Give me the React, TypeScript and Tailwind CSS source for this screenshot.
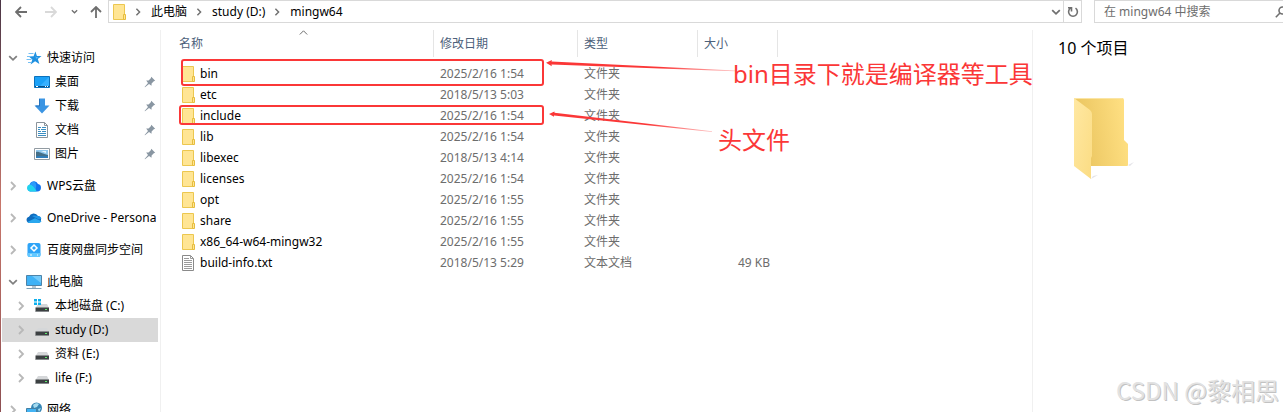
import type { ReactNode } from "react";

type FileRow = { name: string; date: string; type: string; size?: string };

const files: FileRow[] = [
  { name: "bin", date: "2025/2/16 1:54", type: "文件夹" },
  { name: "etc", date: "2018/5/13 5:03", type: "文件夹" },
  { name: "include", date: "2025/2/16 1:54", type: "文件夹" },
  { name: "lib", date: "2025/2/16 1:54", type: "文件夹" },
  { name: "libexec", date: "2018/5/13 4:14", type: "文件夹" },
  { name: "licenses", date: "2025/2/16 1:54", type: "文件夹" },
  { name: "opt", date: "2025/2/16 1:55", type: "文件夹" },
  { name: "share", date: "2025/2/16 1:55", type: "文件夹" },
  { name: "x86_64-w64-mingw32", date: "2025/2/16 1:55", type: "文件夹" },
  { name: "build-info.txt", date: "2018/5/13 5:29", type: "文本文档", size: "49 KB" },
];

function Chevron({ down, className }: { down?: boolean; className: string }) {
  return (
    <svg className={className} viewBox="0 0 10 10" fill="none" stroke="currentColor" strokeWidth="1.8">
      <path d={down ? "M1.2 3.2 5 6.8 8.8 3.2" : "M3 1 7 5 3 9"} />
    </svg>
  );
}

function FolderIcon() {
  return (
    <svg className="w-[13px] h-4 shrink-0" viewBox="0 0 13 16">
      <path d="M.5.5h11v15H.5z" fill="#ffe594" stroke="#ecc74f" />
      <path d="M10.5 10.5h2v5h-2z" fill="#ffe594" stroke="#e6bd3e" />
    </svg>
  );
}

function TextFileIcon() {
  return (
    <svg className="w-[13px] h-4 shrink-0" viewBox="0 0 13 16" fill="none" stroke="#8a8a8a">
      <path d="M.5.5h8l3 3v12H.5z" fill="#fff" />
      <path d="M8.5.5v3h3M2 3.5h5M2 5.5h8M2 7.5h8M2 9.5h8M2 11.5h8M2 13.5h8" stroke="#9b9b9b" />
    </svg>
  );
}

function StarIcon() {
  return (
    <svg className="w-4 h-4" viewBox="0 0 16 16">
      <path d="m9.4 1.4 1.5 4.5 4.6.2-3.7 2.9 1.6 5-4.3-2.8-4.5 3.2 1.800-5-3.600-2.900 4.800-.3z" fill="#1e90e0" />
      <path d="M2.5 3.5h5M1 6.5h4M.5 9.5h5M2 12.5h3" stroke="#74bff3" />
      <path d="m9.2 4 .8 3 3 .2-3 1.5z" fill="#5db9f5" />
    </svg>
  );
}

function DesktopIcon() {
  return (
    <svg className="w-4 h-3" viewBox="0 0 16 12">
      <path d="M.5.5h15v11H.5z" fill="#1ba1f7" stroke="#0b72bd" />
      <path d="M15 1v9H6z" fill="#38b1ff" />
      <path d="M1 10.5h14" stroke="#0a4f86" />
      <path d="M2 10.5h2M11 10.5h1M13 10.5h1" stroke="#fff" />
    </svg>
  );
}

function DownloadIcon() {
  return (
    <svg className="w-4 h-4" viewBox="0 0 16 16">
      <path d="M5 .5h6v7h4.5L8 15.5.5 7.5H5z" fill="#3b95e3" />
      <path d="M5.5 1v7H1.7" fill="none" stroke="#2573bd" />
    </svg>
  );
}

function DocumentIcon() {
  return (
    <svg className="w-3 h-4" viewBox="0 0 12 16">
      <path d="M.5.5h8l3 3v12H.5z" fill="#fff" stroke="#8b949b" />
      <path d="M8.5.5v3h3" fill="none" stroke="#8b949b" />
      <path d="M2 5.5h3M6 5.5h4M2 7.5h2M5 7.5h5M2 9.5h3M6 9.5h4M2 11.5h8M2 13.5h8" stroke="#3b8ec2" />
    </svg>
  );
}

function PictureIcon() {
  return (
    <svg className="w-4 h-3" viewBox="0 0 16 12">
      <path d="M.5.5h15v11H.5z" fill="#fff" stroke="#929ba2" />
      <path d="M2 2h12v8H2z" fill="#8fc8ee" />
      <path d="M2 4c3-1 6 2 12 3v3H2z" fill="#446f88" />
      <path d="M2 8.5c4-1 8 0 12-.5v2H2z" fill="#2f7dbb" />
      <path d="M7 3h5v2z" fill="#e6f4fc" />
    </svg>
  );
}

function WpsIcon() {
  return (
    <svg className="w-4 h-3" viewBox="0 0 16 12">
      <path d="M4 11.5a3.5 3.5 0 0 1-.5-6.5A4.5 4.5 0 0 1 12 4a3.8 3.8 0 0 1-.5 7.5z" fill="#1173ee" />
      <path d="M4 11.5A3.5 3.5 0 0 1 4 4.6c2.5 0 5.5 3 6.5 6.9z" fill="#21d3ee" />
      <path d="M8 1.3c-2 .4-3.5 1.5-4.2 3.5 3 .2 4.5 2.2 5.5 4.7C11 6 10.5 3 8 1.3z" fill="#2a9bfa" />
    </svg>
  );
}

function OneDriveIcon() {
  return (
    <svg className="w-4 h-3" viewBox="0 0 16 11">
      <path d="M3.5 10.5A3.2 3.2 0 0 1 3 4.2 5 5 0 0 1 12 3.5a3.6 3.6 0 0 1 .5 7z" fill="#0f6cbd" />
      <path d="M6 3.5 13 7l2.5-1A3.5 3.5 0 0 0 12 3.5c-2-.5-3.5-.8-6 0z" fill="#2095e6" />
      <path d="M1.5 9.5 9 5.8l6.5 3c-.8 1.2-1.8 1.7-3 1.7h-9c-.8 0-1.5-.4-2-1z" fill="#2aa7ee" />
    </svg>
  );
}

function NetdiskIcon() {
  return (
    <svg className="w-4 h-4" viewBox="0 0 16 16">
      <rect x="1.5" y="1" width="13" height="14" rx="2" fill="#2fa4f7" />
      <path d="M1.5 11h13v2a2 2 0 0 1-2 2h-9a2 2 0 0 1-2-2z" fill="#63c8ff" />
      <path d="m8 3 3 3-3 3-3-3z" fill="none" stroke="#fff" strokeWidth="1.5" />
      <path d="M4 13h2M11 13h1" stroke="#fff" />
    </svg>
  );
}

function ComputerIcon() {
  return (
    <svg className="w-4 h-4" viewBox="0 0 16 16">
      <path d="M.5 1.5h15v10H.5z" fill="#3fb2f6" stroke="#4d83a8" />
      <path d="M15 2v7L6 2z" fill="#74cbfb" />
      <path d="M6 12h4v2H6z" fill="#b8c5ce" />
      <path d="M.5 14.5h15" stroke="#7da0b7" />
    </svg>
  );
}

function DriveIcon({ system }: { system?: boolean }) {
  return (
    <svg className="w-4 h-4" viewBox="0 0 16 16">
      <path d="M4 6h9l2 4H1.5z" fill="#d5d7d9" />
      <path d="M1.5 9.5H15v4H1.5z" fill="#3c4042" />
      <path d="M1.5 13.5H15" stroke="#85898b" />
      <path d="M11 11.5h2" stroke="#5dec6c" />
      {system && <path d="M0 1h3v2.500H0zM4 1h3v2.500H4zM0 4.500h3V7H0zM4 4.500h3V7H4z" fill="#0cafed" />}
    </svg>
  );
}

function NetworkIcon() {
  return (
    <svg className="w-4 h-4" viewBox="0 0 16 16">
      <circle cx="10.5" cy="6" r="5.5" fill="#3686b5" />
      <path d="M7 3c2-2 5-2 6-1l-2 3-3 1zM12 7l3-1-2 4z" fill="#a6dbef" />
      <path d="M.5 6.5h10v7H.5z" fill="#42b3f4" stroke="#4580a3" />
      <path d="M2 15.5h7" stroke="#7da0b7" />
    </svg>
  );
}

function PinIcon() {
  return (
    <svg className="w-3 h-3 shrink-0" viewBox="0 0 12 12">
      <path d="M7.3.8 11.2 4.7 9.8 5.2 7.6 7.5 7.5 9.8 5 7.9 1 11.2.6 11 4 7 2.2 4.6 4.6 4.5 6.8 2.2z" fill="#8996a2" />
    </svg>
  );
}

type NavItemProps = {
  icon: ReactNode;
  label: string;
  open?: boolean;
  child?: boolean;
  pinned?: boolean;
  selected?: boolean;
};

function NavItem({ icon, label, open, child, pinned, selected }: NavItemProps) {
  return (
    <li className={selected ? "bg-[#d9d9d9]" : ""}>
      <a href="#" className={child ? "flex items-center h-6 pl-[14px]" : "flex items-center h-6 pl-[6px]"}>
        {pinned ? (
          <span className="w-[10px] shrink-0" />
        ) : (
          <Chevron
            down={open}
            className={open ? "w-[10px] h-[10px] shrink-0 text-[#808080]" : "w-[10px] h-[10px] shrink-0 text-[#b8b8b8]"}
          />
        )}
        <span className="flex w-4 ml-2 mr-[5px] shrink-0 items-center justify-center">{icon}</span>
        <span className="flex-1 overflow-hidden whitespace-nowrap">{label}</span>
        {pinned && <span className="pr-[2px]"><PinIcon /></span>}
      </a>
    </li>
  );
}

function Toolbar() {
  return (
    <header className="flex h-[23px] shrink-0">
      <div className="flex items-center w-[107px] shrink-0 text-[#6e6e6e]">
        <button aria-label="后退" className="ml-[14px]">
          <svg className="w-3 h-3" viewBox="0 0 12 12" fill="none" stroke="currentColor" strokeWidth="1.8">
            <path d="M12 6H1M6 1 1 6l5 5" />
          </svg>
        </button>
        <button aria-label="前进" className="ml-[18px] text-[#d9d9d9]">
          <svg className="w-3 h-3" viewBox="0 0 12 12" fill="none" stroke="currentColor" strokeWidth="1.8">
            <path d="M0 6h11M6 1l5 5-5 5" />
          </svg>
        </button>
        <button aria-label="最近浏览的位置" className="ml-[14px]">
          <Chevron down className="w-[7px] h-[7px]" />
        </button>
        <button aria-label="上移" className="ml-3">
          <svg className="w-3 h-3" viewBox="0 0 12 12" fill="none" stroke="currentColor" strokeWidth="1.8">
            <path d="M6 12V1M1 6l5-5 5 5" />
          </svg>
        </button>
      </div>
      <div className="flex flex-1 border border-[#d9d9d9]">
        <nav className="flex flex-1 items-center pl-1">
          <FolderIcon />
          <Chevron className="w-2 h-2 ml-2 mr-[9px] text-[#707070]" />
          <a href="#">此电脑</a>
          <Chevron className="w-2 h-2 ml-2 mr-[9px] text-[#707070]" />
          <a href="#">study (D:)</a>
          <Chevron className="w-2 h-2 ml-2 mr-[9px] text-[#707070]" />
          <a href="#">mingw64</a>
        </nav>
        <button aria-label="历史记录" className="pr-[2px] text-[#707070]">
          <Chevron down className="w-[10px] h-[10px]" />
        </button>
        <button aria-label="刷新" className="flex items-center justify-center w-[18px] border-l border-[#d9d9d9] text-[#707070]">
          <svg className="w-3 h-3" viewBox="0 0 12 12" fill="none" stroke="currentColor" strokeWidth="1.6">
            <path d="M8.5 2.2a4.4 4.4 0 1 1-5 0M4.500 5.500V1.700H1" />
          </svg>
        </button>
      </div>
      <label className="flex items-center w-[189px] ml-3 shrink-0 border border-r-0 border-[#d9d9d9] overflow-hidden">
        <input
          type="search"
          aria-label="搜索"
          placeholder="在 mingw64 中搜索"
          className="w-[172px] shrink-0 pl-[9px] outline-none placeholder:text-[#6d6d6d]"
        />
        <svg className="w-3 h-3 ml-2 shrink-0" viewBox="0 0 12 12" fill="none" stroke="#707070" strokeWidth="1.6">
          <circle cx="7.5" cy="4.5" r="3.5" />
          <path d="M5 7 .8 11.2" />
        </svg>
      </label>
    </header>
  );
}

function Sidebar() {
  return (
    <aside className="w-40 shrink-0 border-r border-[#f0f0f0] pt-4 pl-px pr-[2px]">
      <ul>
        <NavItem icon={<StarIcon />} label="快速访问" open />
        <NavItem icon={<DesktopIcon />} label="桌面" child pinned />
        <NavItem icon={<DownloadIcon />} label="下载" child pinned />
        <NavItem icon={<DocumentIcon />} label="文档" child pinned />
        <NavItem icon={<PictureIcon />} label="图片" child pinned />
      </ul>
      <ul className="mt-2 flex flex-col gap-2">
        <NavItem icon={<WpsIcon />} label="WPS云盘" />
        <NavItem icon={<OneDriveIcon />} label="OneDrive - Persona" />
        <NavItem icon={<NetdiskIcon />} label="百度网盘同步空间" />
      </ul>
      <ul className="mt-2">
        <NavItem icon={<ComputerIcon />} label="此电脑" open />
        <NavItem icon={<DriveIcon system />} label="本地磁盘 (C:)" child />
        <NavItem icon={<DriveIcon />} label="study (D:)" child selected />
        <NavItem icon={<DriveIcon />} label="资料 (E:)" child />
        <NavItem icon={<DriveIcon />} label="life (F:)" child />
      </ul>
      <ul className="mt-2">
        <NavItem icon={<NetworkIcon />} label="网络" />
      </ul>
    </aside>
  );
}

function FileTable() {
  return (
    <table className="table-fixed w-[617px] border-collapse text-left text-[#6d6d6d]">
      <thead className="text-[#4c607a]">
        <tr>
          <th className="w-[273px] p-0 pb-[6px] font-normal">
            <div className="relative flex items-center h-[27px] pl-[18px] border-r border-[#e5e5e5]">
              名称
              <svg className="absolute top-0 left-[138px] w-[9px] h-[5px]" viewBox="0 0 9 5" fill="none" stroke="#6d6d6d">
                <path d="M.8 4.5 4.5.8l3.7 3.7" />
              </svg>
            </div>
          </th>
          <th className="w-36 p-0 pb-[6px] font-normal">
            <div className="flex items-center h-[27px] pl-[6px] border-r border-[#e5e5e5]">修改日期</div>
          </th>
          <th className="w-[120px] p-0 pb-[6px] font-normal">
            <div className="flex items-center h-[27px] pl-[6px] border-r border-[#e5e5e5]">类型</div>
          </th>
          <th className="w-20 p-0 pb-[6px] font-normal">
            <div className="flex items-center h-[27px] pl-[6px] border-r border-[#e5e5e5]">大小</div>
          </th>
        </tr>
      </thead>
      <tbody>
        {files.map((file) => (
          <tr key={file.name} className="h-[21px]">
            <td className="p-0 pl-[21px] text-black">
              <span className="flex items-center gap-[5px]">
                {file.size ? <TextFileIcon /> : <FolderIcon />}
                {file.name}
              </span>
            </td>
            <td className="p-0 pl-[6px]">{file.date}</td>
            <td className="p-0 pl-[6px]">{file.type}</td>
            <td className="p-0 pr-2 text-right">{file.size}</td>
          </tr>
        ))}
      </tbody>
    </table>
  );
}

function DetailsPane() {
  return (
    <aside className="w-[251px] shrink-0 border-l border-[#f0f0f0] pt-[6px] pl-[25px]">
      <p className="text-base leading-6 text-black">10 个项目</p>
      <svg className="w-[62px] h-[84px] mt-[37px] ml-4" viewBox="0 0 62 84">
        <defs>
          <linearGradient id="folderBack" x1="0" y1=".6" x2="1" y2=".4">
            <stop offset="0" stopColor="#e8c25c" />
            <stop offset="1" stopColor="#ffe083" />
          </linearGradient>
          <linearGradient id="folderFront" x1="0" y1="0" x2="1" y2="1">
            <stop offset="0" stopColor="#ffe8a2" />
            <stop offset="1" stopColor="#fbdc83" />
          </linearGradient>
        </defs>
        <path d="m54 68 6-3-4 4zM17 82l7-4-5 1z" fill="#e4e4e8" />
        <path d="M0 1h48q2 0 2 2v40l4 4v21q0 1-1 1H0z" fill="url(#folderBack)" />
        <path d="M0 1.5h48" stroke="#fbe5a4" />
        <path d="m0 1 16 12q2 2 2 4v42l-1 2v21L0 69z" fill="url(#folderFront)" />
      </svg>
    </aside>
  );
}

// red marks drawn over the file list
function Annotations() {
  return (
    <div className="absolute inset-0 pointer-events-none text-2xl leading-8 text-[#fb3737] whitespace-nowrap">
      <div className="absolute left-[181px] top-[59px] w-[363px] h-[27px] rounded-[3px] border-2 border-[#fb3737]" />
      <div className="absolute left-[179px] top-[105px] w-[365px] h-5 rounded-[3px] border-2 border-[#fb3737]" />
      <svg className="absolute left-[544px] top-[56px] w-[200px] h-20" viewBox="0 0 200 80">
        <defs>
          <linearGradient id="arrowFade" x1="0" x2="1">
            <stop offset="0" stopColor="#fb3737" />
            <stop offset=".6" stopColor="#fb3737" />
            <stop offset="1" stopColor="#fb3737" stopOpacity=".3" />
          </linearGradient>
        </defs>
        <path d="m2 6.800 6-2.800-.5 1.500L191 14.500v.8L7.500 8.500l.3 1.800z" fill="url(#arrowFade)" />
        <path d="m5 58 5.500-2.500v1.200L168 75.200v.8L10 59.500v1.300z" fill="url(#arrowFade)" />
      </svg>
      <p className="absolute left-[733px] top-[58px]">bin目录下就是编译器等工具</p>
      <p className="absolute left-[718px] top-[124px]">头文件</p>
    </div>
  );
}

export default function App() {
  return (
    <div className="relative flex h-screen overflow-hidden bg-white text-xs leading-4 text-black font-['Noto_Sans','Noto_Sans_CJK_SC',sans-serif]">
      <div className="w-px shrink-0 bg-linear-to-b from-[#4a3545] via-[#c9776b] to-[#8d4f52]" />
      <div className="flex flex-col flex-1 min-w-0">
        <Toolbar />
        <div className="flex flex-1 min-h-0 mt-[7px]">
          <Sidebar />
          <main className="flex-1 min-w-0">
            <FileTable />
          </main>
          <DetailsPane />
        </div>
      </div>
      <Annotations />
      <p className="absolute right-1 bottom-[6px] text-2xl leading-8 text-[#e2e2e2] font-['Noto_Sans_CJK_SC',sans-serif] [text-shadow:1px_1px_0_#c2c2c2]">
        CSDN @黎相思
      </p>
    </div>
  );
}
